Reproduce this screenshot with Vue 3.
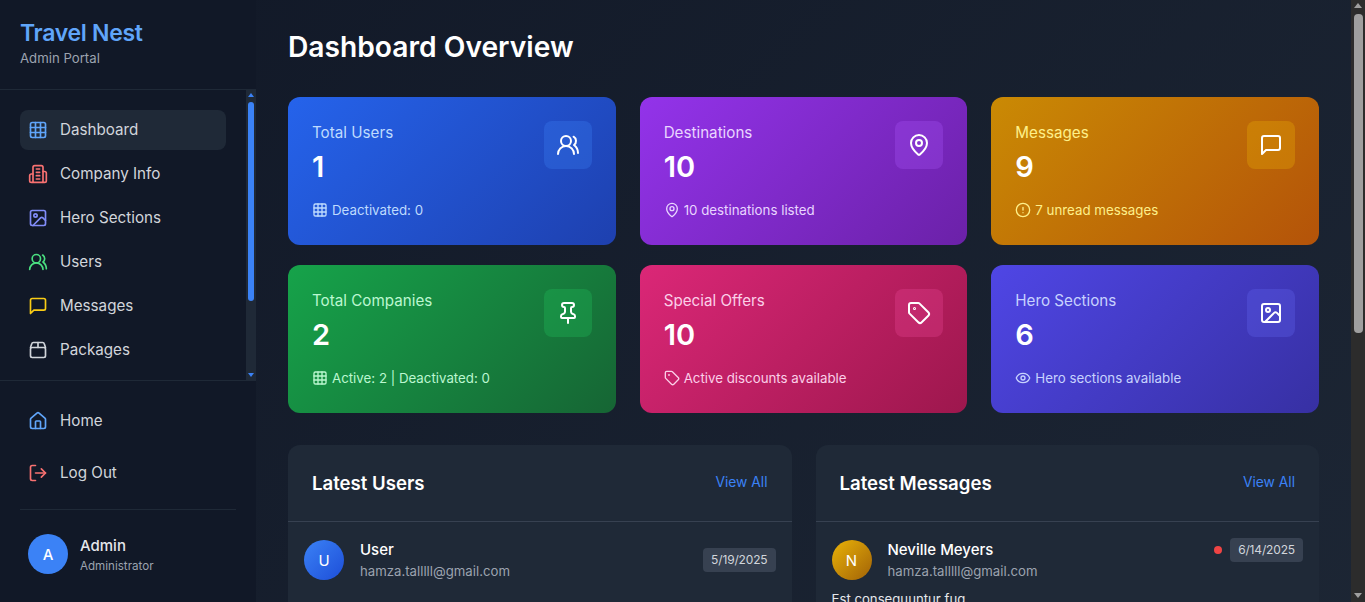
<script setup>
const stroke = { fill: 'none', stroke: 'currentColor', 'stroke-width': 2, 'stroke-linecap': 'round', 'stroke-linejoin': 'round' }
const icons = {
  grid: [['rect', { x: 3, y: 3, width: 18, height: 18, rx: 2 }], ['path', { d: 'M3 9h18M3 15h18M9 3v18M15 3v18' }]],
  building: [['path', { d: 'M6 22V4a2 2 0 0 1 2-2h8a2 2 0 0 1 2 2v18z' }], ['path', { d: 'M6 12H4a2 2 0 0 0-2 2v6a2 2 0 0 0 2 2h2' }], ['path', { d: 'M18 9h2a2 2 0 0 1 2 2v9a2 2 0 0 1-2 2h-2' }], ['path', { d: 'M10 6h4M10 10h4M10 14h4M10 18h4' }]],
  image: [['rect', { x: 3, y: 3, width: 18, height: 18, rx: 2 }], ['circle', { cx: 9, cy: 9, r: 2 }], ['path', { d: 'm21 15-3.086-3.086a2 2 0 0 0-2.828 0L6 21' }]],
  users: [['path', { d: 'M18 21a8 8 0 0 0-16 0' }], ['circle', { cx: 10, cy: 8, r: 5 }], ['path', { d: 'M22 20c0-3.37-2-6.5-4-8a5 5 0 0 0-.45-8.3' }]],
  message: [['path', { d: 'M21 15a2 2 0 0 1-2 2H7l-4 4V5a2 2 0 0 1 2-2h14a2 2 0 0 1 2 2z' }]],
  box: [['path', { d: 'M3 9l1.5-4.5A2 2 0 0 1 6.4 3h11.2a2 2 0 0 1 1.9 1.5L21 9' }], ['rect', { x: 3, y: 9, width: 18, height: 12, rx: 2 }], ['path', { d: 'M12 3v6' }]],
  home: [['path', { d: 'M15 21v-8a1 1 0 0 0-1-1h-4a1 1 0 0 0-1 1v8' }], ['path', { d: 'M3 10a2 2 0 0 1 .709-1.528l7-5.999a2 2 0 0 1 2.582 0l7 5.999A2 2 0 0 1 21 10v9a2 2 0 0 1-2 2H5a2 2 0 0 1-2-2z' }]],
  logout: [['path', { d: 'M9 21H5a2 2 0 0 1-2-2V5a2 2 0 0 1 2-2h4' }], ['path', { d: 'm16 17 5-5-5-5' }], ['path', { d: 'M21 12H9' }]],
  pin: [['path', { d: 'M12 17v5' }], ['path', { d: 'M9 10.76a2 2 0 0 1-1.11 1.79l-1.78.9A2 2 0 0 0 5 15.24V16a1 1 0 0 0 1 1h12a1 1 0 0 0 1-1v-.76a2 2 0 0 0-1.11-1.79l-1.78-.9A2 2 0 0 1 15 10.76V7a1 1 0 0 1 1-1 2 2 0 0 0 0-4H8a2 2 0 0 0 0 4 1 1 0 0 1 1 1z' }]],
  map: [['path', { d: 'M20 10c0 4.993-5.539 10.193-7.399 11.799a1 1 0 0 1-1.202 0C9.539 20.193 4 14.993 4 10a8 8 0 0 1 16 0' }], ['circle', { cx: 12, cy: 10, r: 3 }]],
  tag: [['path', { d: 'M12.586 2.586A2 2 0 0 0 11.172 2H4a2 2 0 0 0-2 2v7.172a2 2 0 0 0 .586 1.414l8.704 8.704a2.426 2.426 0 0 0 3.42 0l6.58-6.58a2.426 2.426 0 0 0 0-3.42z' }], ['circle', { cx: 7.5, cy: 7.5, r: 0.5 }]],
  alert: [['circle', { cx: 12, cy: 12, r: 10 }], ['path', { d: 'M12 8v4M12 16h.01' }]],
  eye: [['path', { d: 'M2.062 12.348a1 1 0 0 1 0-.696 10.75 10.75 0 0 1 19.876 0 1 1 0 0 1 0 .696 10.75 10.75 0 0 1-19.876 0' }], ['circle', { cx: 12, cy: 12, r: 3 }]]
}
const nav = [
  { label: 'Dashboard', icon: 'grid', color: 'c-blue', active: true },
  { label: 'Company Info', icon: 'building', color: 'c-red' },
  { label: 'Hero Sections', icon: 'image', color: 'c-indigo' },
  { label: 'Users', icon: 'users', color: 'c-green' },
  { label: 'Messages', icon: 'message', color: 'c-yellow' },
  { label: 'Packages', icon: 'box', color: 'c-gray' }
]
const cards = [
  { label: 'Total Users', value: '1', foot: 'Deactivated: 0', icon: 'users', footIcon: 'grid', tone: 'blue' },
  { label: 'Destinations', value: '10', foot: '10 destinations listed', icon: 'map', footIcon: 'map', tone: 'purple' },
  { label: 'Messages', value: '9', foot: '7 unread messages', icon: 'message', footIcon: 'alert', tone: 'amber' },
  { label: 'Total Companies', value: '2', foot: 'Active: 2 | Deactivated: 0', icon: 'pin', footIcon: 'grid', tone: 'green' },
  { label: 'Special Offers', value: '10', foot: 'Active discounts available', icon: 'tag', footIcon: 'tag', tone: 'pink' },
  { label: 'Hero Sections', value: '6', foot: 'Hero sections available', icon: 'image', footIcon: 'eye', tone: 'indigo' }
]
</script>

<template>
  <div class="layout">
    <aside class="sidebar">
      <div class="brand">
        <div class="brand-name">Travel Nest</div>
        <div class="brand-sub">Admin Portal</div>
      </div>
      <nav class="nav">
        <a v-for="item in nav" :key="item.label" class="nav-item" :class="{ active: item.active }">
          <svg class="ico" :class="item.color" viewBox="0 0 24 24" v-bind="stroke">
            <component :is="s[0]" v-for="(s, i) in icons[item.icon]" :key="i" v-bind="s[1]" />
          </svg>
          <span class="lbl">{{ item.label }}</span>
        </a>
        <div class="nav-track">
          <i class="tri-up"></i>
          <b class="nav-thumb"></b>
          <i class="tri-down"></i>
        </div>
      </nav>
      <div class="side-foot">
        <a class="foot-link">
          <svg class="ico c-blue" viewBox="0 0 24 24" v-bind="stroke">
            <component :is="s[0]" v-for="(s, i) in icons.home" :key="i" v-bind="s[1]" />
          </svg>
          <span class="lbl">Home</span>
        </a>
        <a class="foot-link">
          <svg class="ico c-red" viewBox="0 0 24 24" v-bind="stroke">
            <component :is="s[0]" v-for="(s, i) in icons.logout" :key="i" v-bind="s[1]" />
          </svg>
          <span class="lbl">Log Out</span>
        </a>
        <div class="me">
          <div class="me-avatar">A</div>
          <div>
            <div class="me-name">Admin</div>
            <div class="me-role">Administrator</div>
          </div>
        </div>
      </div>
    </aside>

    <main class="main">
      <h1 class="title">Dashboard Overview</h1>
      <section class="cards">
        <article v-for="c in cards" :key="c.label" class="card" :class="c.tone">
          <div class="card-top">
            <div>
              <div class="card-label">{{ c.label }}</div>
              <div class="card-value">{{ c.value }}</div>
            </div>
            <div class="card-icon">
              <svg class="ico white" viewBox="0 0 24 24" v-bind="stroke">
                <component :is="s[0]" v-for="(s, i) in icons[c.icon]" :key="i" v-bind="s[1]" />
              </svg>
            </div>
          </div>
          <div class="card-foot">
            <svg class="ico-sm" viewBox="0 0 24 24" v-bind="stroke">
              <component :is="s[0]" v-for="(s, i) in icons[c.footIcon]" :key="i" v-bind="s[1]" />
            </svg>
            <span>{{ c.foot }}</span>
          </div>
        </article>
      </section>

      <section class="panels">
        <div class="panel">
          <header class="panel-head">
            <h2>Latest Users</h2>
            <a class="view-all">View All</a>
          </header>
          <div class="row">
            <div class="avatar av-blue">U</div>
            <div class="who">
              <div class="who-name">User</div>
              <div class="who-mail">hamza.talllll@gmail.com</div>
            </div>
            <span class="date">5/19/2025</span>
          </div>
        </div>
        <div class="panel">
          <header class="panel-head">
            <h2>Latest Messages</h2>
            <a class="view-all">View All</a>
          </header>
          <div class="row msg">
            <div class="avatar av-amber">N</div>
            <div class="who">
              <div class="who-name">Neville Meyers</div>
              <div class="who-mail">hamza.talllll@gmail.com</div>
            </div>
            <div class="msg-meta">
              <span class="dot"></span>
              <span class="date">6/14/2025</span>
            </div>
          </div>
          <p class="msg-text">Est consequuntur fug</p>
        </div>
      </section>
    </main>

    <div class="page-bar">
      <i class="bar-up"></i>
      <b class="bar-thumb"></b>
      <i class="bar-down"></i>
    </div>
  </div>
</template>

<style>
body { background: #111827; }
</style>

<style scoped>
* { box-sizing: border-box; }
.layout { display: flex; padding-right: 14px; font-family: Inter, "Noto Sans", sans-serif; color: #fff; min-height: 1083px; background: linear-gradient(135deg, #111827, #1f2937); }
.sidebar { position: sticky; top: 0; flex: 0 0 256px; height: 100vh; background: #111827; display: flex; flex-direction: column; }
.brand { height: 90px; padding: 20px 20px 0; border-bottom: 1px solid #1f2937; }
.brand-name { font-size: 23px; line-height: 26px; font-weight: 600; color: #60a5fa; letter-spacing: -0.3px; }
.brand-sub { font-size: 13.2px; line-height: 18px; margin-top: 3px; color: #9ca3af; }
.nav { position: relative; height: 291px; overflow: hidden; padding: 20px 30px 20px 20px; border-bottom: 1px solid #1f2937; display: flex; flex-direction: column; gap: 4px; }
.nav-item { flex: none; display: flex; align-items: center; gap: 12px; height: 40px; padding: 0 8px; border-radius: 8px; font-size: 15.2px; color: #d1d5db; }
.nav-item.active { background: #1f2937; }
.lbl { padding-bottom: 2px; }
.nav-track { position: absolute; top: 0; right: 0; bottom: 0; width: 10px; background: #1f2937; }
.nav-thumb { position: absolute; left: 2px; top: 12px; width: 6px; height: 199px; border-radius: 3px; background: #3b82f6; }
.tri-up, .tri-down { position: absolute; left: 2px; width: 0; height: 0; border-left: 3px solid transparent; border-right: 3px solid transparent; }
.tri-up { top: 3px; border-bottom: 4px solid #3b82f6; }
.tri-down { bottom: 3px; border-top: 4px solid #3b82f6; }
.ico { width: 20px; height: 20px; flex: none; }
.c-blue { color: #60a5fa; }
.c-red { color: #f87171; }
.c-indigo { color: #818cf8; }
.c-green { color: #4ade80; }
.c-yellow { color: #facc15; }
.c-gray { color: #d1d5db; }
.side-foot { flex: 1; padding: 20px 20px 0; }
.foot-link { display: flex; align-items: center; gap: 12px; height: 40px; margin-bottom: 12px; padding: 0 8px; font-size: 15.2px; color: #d1d5db; }
.me { margin-top: 16px; padding: 24px 8px 0; border-top: 1px solid #1f2937; display: flex; align-items: center; gap: 12px; }
.me-avatar { width: 40px; height: 40px; border-radius: 50%; background: #3b82f6; display: flex; align-items: center; justify-content: center; font-size: 15px; font-weight: 500; }
.me-name { font-size: 15px; line-height: 20px; margin-top: 2px; font-weight: 500; color: #e5e7eb; }
.me-role { font-size: 11.6px; line-height: 16px; margin-top: 2px; color: #9ca3af; }
.main { flex: 1; min-width: 0; padding: 24px 32px; }
.title { margin: 0; font-size: 28.2px; line-height: 46px; font-weight: 600; }
.cards { margin-top: 27px; display: grid; grid-template-columns: repeat(3, 1fr); gap: 20px 24px; }
.card { height: 148px; border-radius: 12px; padding: 24px; display: flex; flex-direction: column; }
.card-icon { width: 48px; height: 48px; border-radius: 8px; display: flex; align-items: center; justify-content: center; }
.blue { background: linear-gradient(135deg, #2563eb, #1e40af); }
.blue .card-label, .blue .card-foot { color: #bfdbfe; }
.blue .card-icon { background: rgba(59, 130, 246, 0.3); }
.purple { background: linear-gradient(135deg, #9333ea, #6b21a8); }
.purple .card-label, .purple .card-foot { color: #e9d5ff; }
.purple .card-icon { background: rgba(168, 85, 247, 0.3); }
.amber { background: linear-gradient(135deg, #ca8a04, #b45309); }
.amber .card-label, .amber .card-foot { color: #fef08a; }
.amber .card-icon { background: rgba(234, 179, 8, 0.3); }
.green { background: linear-gradient(135deg, #16a34a, #166534); }
.green .card-label, .green .card-foot { color: #bbf7d0; }
.green .card-icon { background: rgba(34, 197, 94, 0.3); }
.pink { background: linear-gradient(135deg, #db2777, #9d174d); }
.pink .card-label, .pink .card-foot { color: #fbcfe8; }
.pink .card-icon { background: rgba(236, 72, 153, 0.3); }
.indigo { background: linear-gradient(135deg, #4f46e5, #3730a3); }
.indigo .card-label, .indigo .card-foot { color: #c7d2fe; }
.indigo .card-icon { background: rgba(99, 102, 241, 0.3); }
.card-top { display: flex; justify-content: space-between; align-items: flex-start; }
.card-label { font-size: 15.2px; line-height: 24px; }
.card-value { margin-top: 4px; font-size: 29px; line-height: 36px; font-weight: 600; }
.white { color: #fff; width: 24px; height: 24px; }
.card-foot { margin-top: 15px; display: flex; align-items: center; gap: 4px; font-size: 13.3px; line-height: 20px; }
.ico-sm { width: 16px; height: 16px; flex: none; }
.panels { margin-top: 32px; display: grid; grid-template-columns: 1fr 1fr; gap: 24px; }
.panel { background: #1f2937; border-radius: 12px; min-height: 400px; }
.panel-head { height: 77px; padding: 0 24px; border-bottom: 1px solid #374151; display: flex; justify-content: space-between; align-items: center; }
.panel-head h2 { margin: 0; font-size: 18.6px; font-weight: 600; }
.view-all { font-size: 13.8px; color: #3b82f6; margin-top: -3px; }
.row { padding: 17px 16px 0; display: flex; align-items: center; gap: 16px; }
.avatar { width: 40px; height: 40px; border-radius: 50%; flex: none; display: flex; align-items: center; justify-content: center; font-size: 15px; }
.av-blue { background: linear-gradient(135deg, #3b82f6, #1d4ed8); }
.av-amber { background: linear-gradient(135deg, #eab308, #a16207); }
.who { flex: 1; }
.who-name { font-size: 15px; line-height: 22px; font-weight: 500; }
.who-mail { font-size: 13.2px; line-height: 20px; color: #9ca3af; }
.date { padding: 0 8px; height: 24px; line-height: 24px; background: #374151; border-radius: 4px; font-size: 12px; color: #d1d5db; letter-spacing: -0.15px; }
.msg { align-items: flex-start; }
.msg .avatar { margin-top: 1px; }
.msg-meta { display: flex; align-items: center; gap: 8px; margin-top: -1px; }
.dot { width: 8px; height: 8px; border-radius: 50%; background: #ef4444; }
.msg-text { margin: 8px 16px 0; font-size: 13.2px; line-height: 20px; color: #e5e7eb; }
.page-bar { position: fixed; top: 0; right: 0; bottom: 0; width: 14px; background: #2c2c2c; }
.bar-thumb { position: absolute; left: 3px; top: 14px; width: 9px; height: 319px; border-radius: 4px; background: #9f9f9f; }
.bar-up, .bar-down { position: absolute; left: 3px; width: 0; height: 0; border-left: 4.5px solid transparent; border-right: 4.5px solid transparent; }
.bar-up { top: 3px; border-bottom: 5px solid #9f9f9f; }
.bar-down { bottom: 4px; border-top: 5px solid #9f9f9f; }
</style>
